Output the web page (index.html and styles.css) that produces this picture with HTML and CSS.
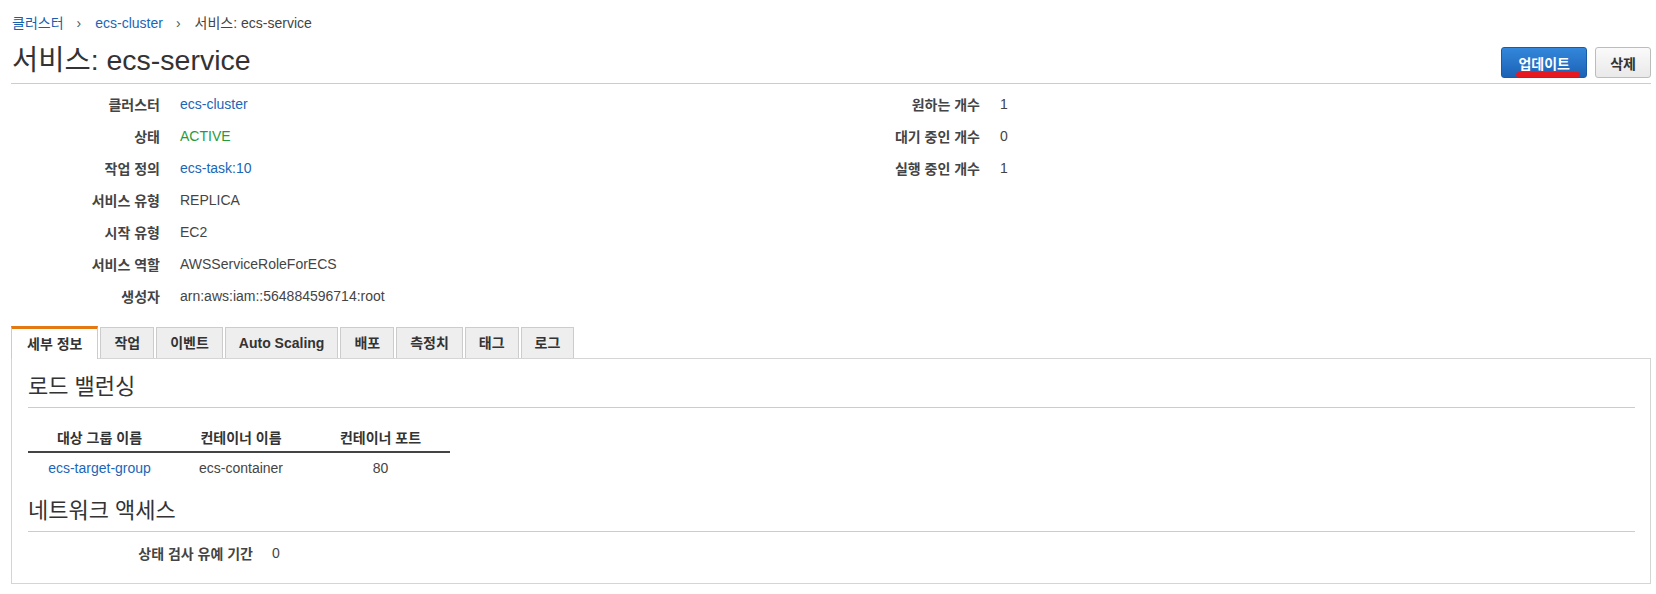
FILE: index.html
```html
<!DOCTYPE html>
<html lang="ko">
<head>
<meta charset="utf-8">
<title>서비스: ecs-service</title>
<link rel="stylesheet" href="styles.css">
</head>
<body>
<div class="page">
  <nav class="crumbs">
    <a class="crumb-link strong">클러스터</a>
    <span class="sep">›</span>
    <a class="crumb-link">ecs-cluster</a>
    <span class="sep">›</span>
    <span class="crumb-current">서비스: ecs-service</span>
  </nav>

  <header class="head">
    <h1 class="title">서비스: ecs-service</h1>
    <div class="actions">
      <button class="btn btn-primary">업데이트<span class="mark"></span></button>
      <button class="btn">삭제</button>
    </div>
  </header>

  <section class="summary">
    <dl class="kv">
      <dt>클러스터</dt><dd><a class="link">ecs-cluster</a></dd>
      <dt>상태</dt><dd class="ok">ACTIVE</dd>
      <dt>작업 정의</dt><dd><a class="link">ecs-task:10</a></dd>
      <dt>서비스 유형</dt><dd>REPLICA</dd>
      <dt>시작 유형</dt><dd>EC2</dd>
      <dt>서비스 역할</dt><dd>AWSServiceRoleForECS</dd>
      <dt>생성자</dt><dd>arn:aws:iam::564884596714:root</dd>
    </dl>
    <dl class="kv">
      <dt>원하는 개수</dt><dd>1</dd>
      <dt>대기 중인 개수</dt><dd>0</dd>
      <dt>실행 중인 개수</dt><dd>1</dd>
    </dl>
  </section>

  <ul class="tabs">
    <li class="tab active">세부 정보</li>
    <li class="tab">작업</li>
    <li class="tab">이벤트</li>
    <li class="tab">Auto Scaling</li>
    <li class="tab">배포</li>
    <li class="tab">측정치</li>
    <li class="tab">태그</li>
    <li class="tab">로그</li>
  </ul>

  <div class="panel">
    <h2 class="section-title">로드 밸런싱</h2>
    <table class="lb-table">
      <thead>
        <tr><th>대상 그룹 이름</th><th>컨테이너 이름</th><th>컨테이너 포트</th></tr>
      </thead>
      <tbody>
        <tr><td><a class="link">ecs-target-group</a></td><td>ecs-container</td><td>80</td></tr>
      </tbody>
    </table>

    <h2 class="section-title second">네트워크 액세스</h2>
    <dl class="kv kv-net">
      <dt>상태 검사 유예 기간</dt><dd>0</dd>
    </dl>
  </div>
</div>
</body>
</html>
```

FILE: styles.css
```css
* { box-sizing: border-box; }

html, body {
  margin: 0;
  padding: 0;
  background: #fff;
}

body {
  font-family: "Liberation Sans", "Noto Sans CJK KR", sans-serif;
  font-size: 14px;
  color: #444;
}

.page {
  padding: 13px 5px 0 11px;
}

/* breadcrumbs */
.crumbs {
  display: flex;
  align-items: center;
  height: 20px;
  line-height: 20px;
  padding-left: 1px;
  font-size: 14px;
}
.crumb-link { color: #1a66b8; cursor: pointer; }
.crumb-link.strong { color: #175fad; }
.crumb-current { color: #444; }
.sep {
  margin: 0 14px 0 13px;
  color: #555;
}

/* header */
.head {
  display: flex;
  justify-content: space-between;
  align-items: flex-start;
  margin-top: 11px;
  padding-bottom: 5px;
  border-bottom: 1px solid #cccccc;
}
.title {
  margin: 0;
  padding-left: 1px;
  font-size: 28.5px;
  line-height: 33px;
  font-weight: normal;
  color: #333;
}
.actions {
  display: flex;
  gap: 8px;
  margin-top: 3px;
}
.btn {
  position: relative;
  height: 31px;
  padding: 0 14px;
  font-family: inherit;
  font-size: 14px;
  font-weight: bold;
  color: #333;
  border: 1px solid #bcbcbc;
  border-radius: 3px;
  background: linear-gradient(#fafafa, #e9e9e9);
}
.btn-primary {
  width: 86px;
  padding: 0;
  color: #fff;
  border-color: #1b5ba6;
  background: linear-gradient(#3387dc, #1b62b5);
}
.mark {
  position: absolute;
  left: 14px;
  top: 24px;
  width: 64px;
  height: 5px;
  border-radius: 3px;
  background: #e5191f;
}

/* summary */
.summary {
  display: grid;
  grid-template-columns: 820px 1fr;
  margin-top: 4px;
}
.kv {
  display: grid;
  grid-template-columns: 149px 1fr;
  column-gap: 20px;
  grid-auto-rows: 32px;
  align-items: center;
  margin: 0;
}
.kv dt {
  text-align: right;
  font-weight: bold;
  color: #444;
}
.kv dd {
  margin: 0;
  color: #444;
}
.link { color: #1a66b8; cursor: pointer; }
.ok { color: #1f9d3a !important; }

/* tabs */
.tabs {
  display: flex;
  align-items: flex-end;
  gap: 2px;
  list-style: none;
  margin: 14px 0 0 0;
  padding: 0;
  position: relative;
  z-index: 1;
}
.tab {
  height: 31px;
  line-height: 30px;
  padding: 0 13px;
  font-size: 14px;
  font-weight: bold;
  color: #333;
  background: #eeeeee;
  border: 1px solid #cccccc;
  border-bottom: none;
}
.tab.active {
  height: 33px;
  margin-bottom: -1px;
  padding: 0 15px;
  background: #fff;
  border-top: 3px solid #e47911;
}

/* panel */
.panel {
  border: 1px solid #d5d5d5;
  padding: 14px 15px 15px 16px;
}
.section-title {
  margin: 0;
  padding-bottom: 6px;
  font-size: 22px;
  line-height: 28px;
  font-weight: normal;
  color: #333;
  border-bottom: 1px solid #cccccc;
}
.section-title.second {
  margin-top: 15px;
}

.lb-table {
  margin-top: 14px;
  border-collapse: collapse;
  width: 422px;
  table-layout: fixed;
}
.lb-table th:nth-child(1) { width: 143px; }
.lb-table th:nth-child(2) { width: 140px; }
.lb-table th:nth-child(3) { width: 139px; }
.lb-table th {
  height: 30px;
  padding: 0;
  font-weight: bold;
  color: #333;
  text-align: center;
  border-bottom: 2px solid #444;
}
.lb-table td {
  height: 30px;
  padding: 0;
  text-align: center;
  color: #444;
}

.kv-net {
  margin-top: 6px;
  grid-template-columns: 225px 1fr;
  column-gap: 19px;
  grid-auto-rows: 30px;
}
```
